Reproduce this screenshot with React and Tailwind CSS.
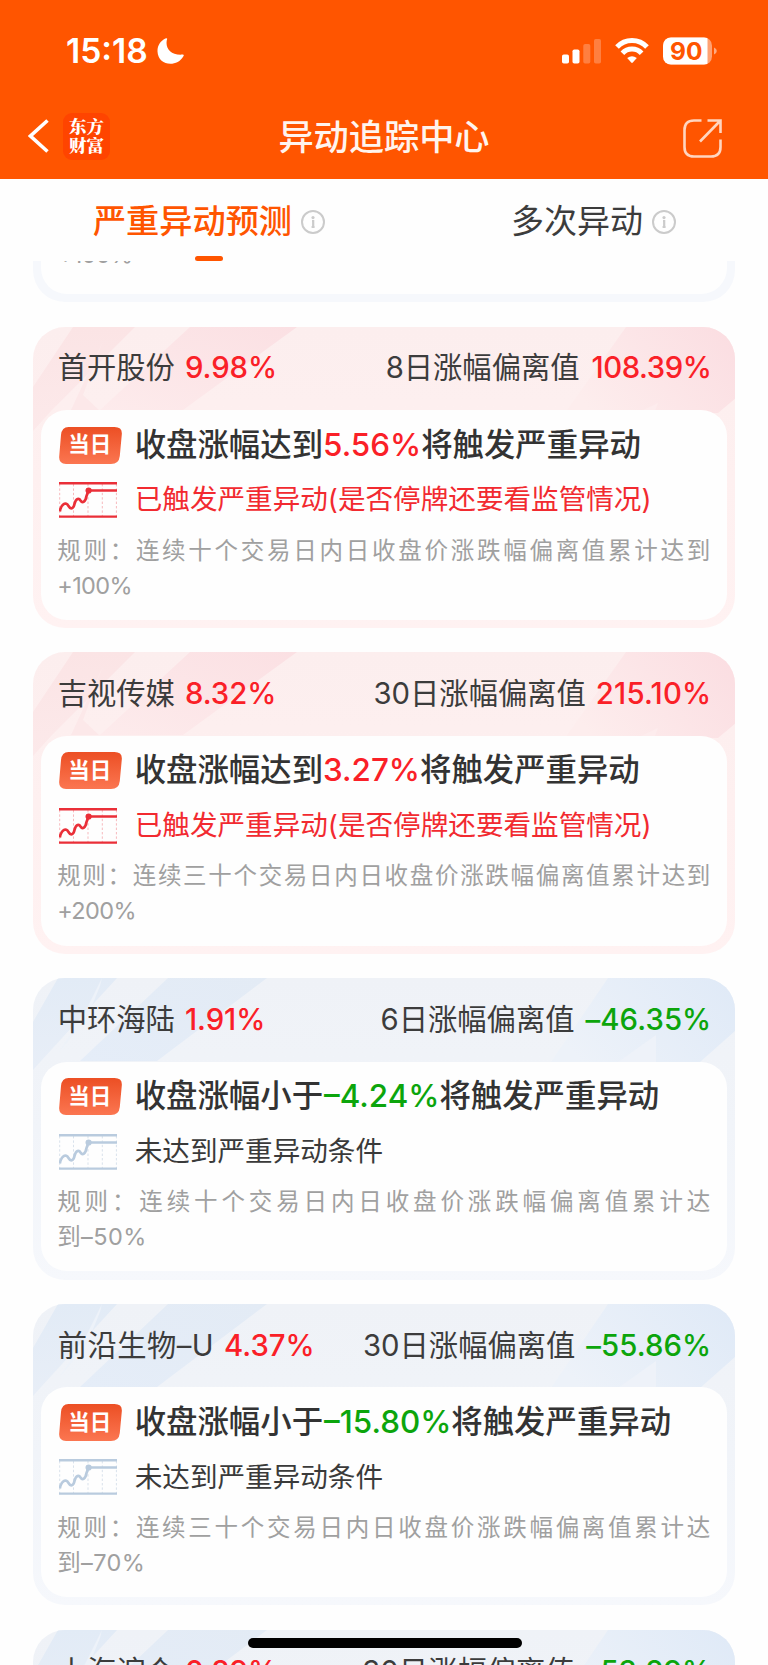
const cards = [
  { name: "首开股份", pct: "9.98%", days: "8日涨幅偏离值", dev: "108.39%", devFit: "tracking-[-0.45px] ml-[2px]", lead: "收盘涨幅达到", mid: "5.56%", hit: true, rule: "规则：连续十个交易日内日收盘价涨跌幅偏离值累计达到", tail: "+100%" },
  { name: "吉视传媒", pct: "8.32%", days: "30日涨幅偏离值", dev: "215.10%", devFit: "tracking-[0.2px]", lead: "收盘涨幅达到", mid: "3.27%", hit: true, rule: "规则：连续三十个交易日内日收盘价涨跌幅偏离值累计达到", tail: "+200%" },
  { name: "中环海陆", pct: "1.91%", days: "6日涨幅偏离值", dev: "–46.35%", devFit: "tracking-[0.1px] ml-[1px]", lead: "收盘涨幅小于", mid: "–4.24%", hit: false, rule: "规则：连续十个交易日内日收盘价涨跌幅偏离值累计达", tail: "到–50%" },
  { name: "前沿生物–U", nameFit: "tracking-[0.45px]", pct: "4.37%", days: "30日涨幅偏离值", dev: "–55.86%", devFit: "tracking-[0.1px] ml-[1px]", lead: "收盘涨幅小于", mid: "–15.80%", hit: false, rule: "规则：连续三十个交易日内日收盘价涨跌幅偏离值累计达", tail: "到–70%" },
  { name: "上海谊众", pct: "0.89%", days: "30日涨幅偏离值", dev: "–53.29%", devFit: "tracking-[0.1px] ml-[1px]", lead: "收盘涨幅小于", mid: "–10.20%", hit: false, rule: "规则：连续三十个交易日内日收盘价涨跌幅偏离值累计达", tail: "到–70%" },
];

function InfoIcon() {
  return (
    <svg className="size-6 shrink-0" viewBox="0 0 24 24" fill="none">
      <circle cx="12" cy="12" r="11" stroke="#cbcbcb" strokeWidth="2" />
      <circle cx="12" cy="7.6" r="1.6" fill="#cbcbcb" />
      <path d="M11 11H12.2v6M10.6 17h3" stroke="#cbcbcb" strokeWidth="2.2" />
    </svg>
  );
}

function RedStripes() {
  return (
    <svg className="absolute left-0 top-0" width="703" height="110" viewBox="0 0 703 110">
      <defs>
        <linearGradient id="ra" x1="0" y1="0" x2="0" y2="1">
          <stop offset="0" stopColor="#fbe4e5" />
          <stop offset="1" stopColor="#fce9ea" />
        </linearGradient>
        <linearGradient id="rb" x1="1" y1="0" x2="0" y2="1">
          <stop offset="0" stopColor="#fbe0e3" />
          <stop offset="1" stopColor="#fdebec" />
        </linearGradient>
        <linearGradient id="rc" x1="0" y1="0.6" x2="1" y2="0.2">
          <stop offset="0" stopColor="#fdeded" />
          <stop offset="1" stopColor="#fbdee2" />
        </linearGradient>
      </defs>
      <path d="M40 0H102L19 83L0 104V60Z" fill="url(#ra)" />
      <path d="M157 0H264L150 83H67Z" fill="url(#rb)" />
      <path d="M70 14L50 68L66 83H38Z" fill="#fce8e9" />
      <path d="M593 0H703V71L685 86H532Z" fill="url(#rc)" />
      <path d="M625 76L608 84H622Z" fill="#fdeced" />
    </svg>
  );
}

function BlueStripes() {
  return (
    <svg className="absolute left-0 top-0" width="703" height="110" viewBox="0 0 703 110">
      <defs>
        <linearGradient id="ba" x1="0" y1="0" x2="0" y2="1">
          <stop offset="0" stopColor="#e2ebf6" />
          <stop offset="1" stopColor="#e8eef7" />
        </linearGradient>
        <linearGradient id="bb" x1="1" y1="0" x2="0" y2="1">
          <stop offset="0" stopColor="#e3ebf5" />
          <stop offset="1" stopColor="#e5edf8" />
        </linearGradient>
        <linearGradient id="bc" x1="0" y1="0.6" x2="1" y2="0.2">
          <stop offset="0" stopColor="#edf2f9" />
          <stop offset="1" stopColor="#e0eaf7" />
        </linearGradient>
      </defs>
      <path d="M25 0H84L8 83L0 92V44Z" fill="url(#ba)" />
      <path d="M69 0L67 8L54 40L26 74L52 34Z" fill="#edf2f9" />
      <path d="M135 0H234L124 83H47Z" fill="url(#bb)" />
      <path d="M575 0H703V52L667 84H518Z" fill="url(#bc)" />
      <path d="M623 57V84H585Z" fill="#eef2f9" />
    </svg>
  );
}

function Badge() {
  return (
    <div className="flex h-[37px] w-[77.5px] shrink-0 items-center">
      <div className="relative ml-[1.5px] flex h-[37px] w-[64px] items-center justify-center">
        <svg className="absolute inset-0" width="64" height="37" viewBox="0 0 64 37">
          <defs>
            <linearGradient id="badge" x1="0" y1="0" x2="0" y2="1">
              <stop offset="0" stopColor="#ec4f24" />
              <stop offset="1" stopColor="#fb7651" />
            </linearGradient>
          </defs>
          <path d="M9.5 0H55.5Q63.5 0 62.8 7.5L60.8 29Q60 37 52 37H7Q-.4 37 .2 29.5L2 8Q2.8 0 9.5 0Z" fill="url(#badge)" />
        </svg>
        <span className="relative -left-[1px] text-[21.5px] leading-none font-bold text-white">当日</span>
      </div>
    </div>
  );
}

function Trend({ hit }) {
  const c = hit ? "#ea2f38" : "#b9cbde";
  const g = hit ? "#f7b9bd" : "#d9e2ec";
  return (
    <div className="w-[77.5px] shrink-0">
      <svg className="ml-[2px]" width="58" height="36" viewBox="0 0 58 36" fill="none">
        <path d="M.7 2V34M14.5 2V34M29 2V34M43.3 2V34M57.4 2V34" stroke={g} strokeWidth="1" strokeDasharray="2.4 2" />
        <path d="M0 1.3H58M0 34.6H58" stroke={c} strokeWidth="2.4" />
        <path d="M.8 29.5C2 22 7 19 9.5 24C11.5 27.5 14.5 27 15.5 22C17 16 20 16 21.5 18.5C23.5 21.5 26.5 20 27.5 14L29.5 8.5H58" stroke={c} strokeWidth="2.7" />
        <circle cx="29.6" cy="8.5" r="3.1" fill={c} />
      </svg>
    </div>
  );
}

function Card({ d }) {
  const up = d.hit;
  return (
    <section
      className={
        "relative h-[301.5px] shrink-0 overflow-hidden rounded-[32px] bg-linear-to-b px-2 " +
        (up ? "from-[#fceeee] via-[#fef0f0] to-[#fff2f2]" : "from-[#eff2f7] via-[#f1f4f9] to-[#f6f8fc]")
      }
    >
      {up ? <RedStripes /> : <BlueStripes />}
      <div className="relative flex h-[83.5px] items-center justify-between pr-[16px] pl-[17px] text-[29.3px] whitespace-nowrap text-[#3c3c3c]">
        <div className="flex items-center gap-[10px]">
          <span className={d.nameFit}>{d.name}</span>
          <span className="font-medium text-[#fa2027]">{d.pct}</span>
        </div>
        <div className="flex items-center gap-[10px]">
          <span>{d.days}</span>
          <span className={"font-medium " + d.devFit + (up ? " text-[#fa2027]" : " text-[#0ca50c]")}>{d.dev}</span>
        </div>
      </div>
      <div className="relative h-[209.7px] rounded-[26px] bg-[#fefefe] pt-[15px] pr-[17px] pl-[16.5px] whitespace-nowrap">
        <div className="flex h-10 items-center">
          <Badge />
          <p className="text-[31.4px] font-medium text-[#333]">
            {d.lead}
            <span className={up ? "text-[#fa2027]" : "ml-[1px] text-[#0ca50c]"}>{d.mid}</span>
            将触发严重异动
          </p>
        </div>
        <div className="mt-[15px] flex h-10 items-center">
          <Trend hit={up} />
          <p className={"text-[27.6px] " + (up ? "text-[#f22a30]" : "text-[#3a3a3a]")}>
            {up ? "已触发严重异动(是否停牌还要看监管情况)" : "未达到严重异动条件"}
          </p>
        </div>
        <div className="mt-[12.5px] text-[23.5px] leading-[35px] text-[#a0a0a0]">
          <p className="[text-align-last:justify]">{d.rule}</p>
          <p className={up ? "tracking-[-0.6px]" : "tracking-[0.4px]"}>{d.tail}</p>
        </div>
      </div>
    </section>
  );
}

export default function App() {
  return (
    <div className="relative flex h-[1665px] w-[768px] flex-col overflow-hidden bg-[#fefefe] font-[Inter,'Noto_Sans_CJK_SC',sans-serif]">
      <header className="h-[179px] shrink-0 bg-[#ff5500] text-white">
        <div className="flex h-[103px] items-center justify-between pr-[50px] pl-[66px]">
          <div className="flex items-center gap-[9px]">
            <span className="text-[33.6px] font-semibold">15:18</span>
            <svg width="27" height="27" viewBox="0 0 27 27" fill="#fff">
              <path d="M10.2.8C7.5 9 13 17.5 25.3 16.6Q27.5 16.3 26.4 18.2C20 29.8 1 28 .5 13.5C.4 7.5 3.5 3 8.3.6Q10.4-.2 10.2.8Z" />
            </svg>
          </div>
          <svg className="-mt-[1px]" width="156" height="28" viewBox="0 0 156 28" fill="#fff">
            <rect x="0" y="17.5" width="7" height="9" rx="1.8" />
            <rect x="10.5" y="12.5" width="7" height="14" rx="1.8" />
            <rect x="21.3" y="7" width="7" height="19.5" rx="1.8" opacity=".25" />
            <rect x="32" y="2" width="7" height="24.5" rx="1.8" opacity=".25" />
            <g fill="none" stroke="#fff" strokeWidth="5">
              <path d="M55 10A20.5 20.5 0 0 1 85 10" />
              <path d="M60.4 16.2A13 13 0 0 1 79.6 16.2" />
            </g>
            <path d="M65.2 21Q70 17.3 74.8 21L70.8 25.6Q70 26.4 69.2 25.6Z" />
            <defs>
              <clipPath id="bat"><rect x="101" y=".5" width="49" height="27" rx="8" /></clipPath>
            </defs>
            <g clipPath="url(#bat)">
              <rect x="101" y="0" width="49" height="28" opacity=".45" />
              <rect x="101" y="0" width="44.5" height="28" />
            </g>
            <path d="M152 10.5Q154.8 11.5 154.8 14T152 17.5Z" opacity=".5" />
            <text x="124.3" y="22.6" textAnchor="middle" fontSize="24.5" fontWeight="700" fill="#ff5500">90</text>
          </svg>
        </div>
        <div className="grid h-[67px] grid-cols-[1fr_auto_1fr] items-center pr-[46px] pl-[28px]">
          <div className="-mt-[1px] flex items-center gap-[14px]">
            <svg width="21" height="34" viewBox="0 0 21 34" fill="none" stroke="#fff" strokeWidth="3.6">
              <path d="M19.5 1.5L2.5 17L19.5 32.5" />
            </svg>
            <div className="flex size-[47px] flex-col items-center justify-center rounded-[9px] bg-[#ff4400] pb-[2px] font-['Noto_Serif_CJK_SC','Noto_Sans_CJK_SC',serif] text-[17.5px] leading-[19.5px] font-black">
              <span>东方</span>
              <span>财富</span>
            </div>
          </div>
          <h1 className="relative top-[1px] left-[9px] text-[35.2px] leading-none font-medium text-[#fff4ee]">异动追踪中心</h1>
          <svg className="mt-[3px] justify-self-end" width="39" height="39" viewBox="0 0 39 39" fill="none" stroke="#ffd5bf" strokeWidth="2.6">
            <path d="M18.5 1.5H11Q1.5 1.5 1.5 11V28Q1.5 37.5 11 37.5H28Q37.5 37.5 37.5 28V20.5" />
            <path d="M24.5 1.5H37.5V14M37 2L17 22.5" />
          </svg>
        </div>
      </header>

      <nav className="grid h-[82px] shrink-0 grid-cols-2">
        <div className="flex flex-col items-center">
          <div className="flex h-[77px] items-center gap-[9px] pt-[8px] pl-[34px]">
            <span className="text-[33.2px] leading-none font-medium text-[#ff5500]">严重异动预测</span>
            <InfoIcon />
          </div>
          <span className="ml-[34px] h-[5px] w-7 rounded-full bg-[#ff5500]" />
        </div>
        <div className="flex h-[77px] items-center gap-[9px] pt-[8px] pl-[127px]">
          <span className="text-[33px] leading-none text-[#3c3c3c]">多次异动</span>
          <InfoIcon />
        </div>
      </nav>

      <main className="flex min-h-0 flex-1 flex-col gap-[24.3px] overflow-hidden px-[32.7px]">
        <div className="flex h-[41.3px] shrink-0 flex-col justify-end overflow-hidden">
          <section className="rounded-[32px] bg-[#f6f8fc] px-2 pb-2">
            <div className="h-[210px] rounded-[26px] bg-[#fefefe] pt-[152.5px] pl-[17px]">
              <p className="text-[23.5px] leading-[35px] tracking-[-0.6px] text-[#a0a0a0]">+100%</p>
            </div>
          </section>
        </div>
        {cards.map((d) => (
          <Card key={d.name} d={d} />
        ))}
      </main>

      <div className="absolute bottom-[17px] left-[248px] h-[10px] w-[274px] rounded-full bg-black" />
    </div>
  );
}
